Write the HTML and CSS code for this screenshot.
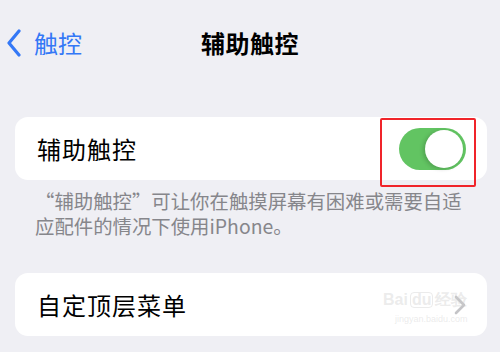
FILE: index.html
```html
<!DOCTYPE html>
<html lang="zh">
<head>
<meta charset="utf-8">
<link rel="stylesheet" href="styles.css">
</head>
<body>
<div class="page">
  <header class="nav">
    <div class="back">
      <svg class="back-icon" width="16" height="28" viewBox="0 0 16 28"><path d="M13 2 L3 14 L13 26" fill="none" stroke="#3478f6" stroke-width="3.2" stroke-linecap="round" stroke-linejoin="round"/></svg>
      <span class="back-text">触控</span>
    </div>
    <h1 class="title">辅助触控</h1>
    <div></div>
  </header>

  <section class="card card-toggle">
    <span class="label">辅助触控</span>
    <div class="switch"><div class="knob"></div></div>
    <div class="highlight"></div>
  </section>
  <p class="desc">“辅助触控”可让你在触摸屏幕有困难或需要自适应配件的情况下使用iPhone。</p>

  <section class="card card-link">
    <span class="label">自定顶层菜单</span>
    <svg class="chev" width="12" height="20" viewBox="0 0 12 20"><path d="M2 2 L10 10 L2 18" fill="none" stroke="#c4c4c7" stroke-width="2.6" stroke-linecap="round" stroke-linejoin="round"/></svg>
    <div class="watermark"><span class="wm-main">Bai<span class="wm-box">du</span>经验</span><span class="wm-sub">jingyan.baidu.com</span></div>
  </section>
</div>
</body>
</html>
```

FILE: styles.css
```css
* { box-sizing: border-box; margin: 0; padding: 0; }
html, body { width: 500px; height: 352px; overflow: hidden; }
body {
  background: #efeff4;
  font-family: "Noto Sans CJK SC", "Noto Sans", sans-serif;
  color: #000;
}
.page { padding: 0 13px 0 15px; }
.nav {
  height: 84px;
  margin: 0 -13px 0 -15px;
  display: grid;
  grid-template-columns: 1fr auto 1fr;
  align-items: center;
  padding-top: 2px;
}
.back {
  display: flex;
  align-items: center;
  padding-left: 6px;
  gap: 12px;
  color: #3478f6;
}
.back-text { font-size: 24px; line-height: 28px; }
.title { font-size: 24px; font-weight: 700; line-height: 28px; letter-spacing: 0.5px; }
.card {
  position: relative;
  background: #fff;
  border-radius: 13px;
  height: 63px;
  display: flex;
  align-items: center;
  justify-content: space-between;
  padding: 0 22px 0 22px;
}
.card-toggle { margin-top: 33px; padding-right: 21px; }
.label { font-size: 24px; line-height: 28px; letter-spacing: 1px; }
.switch {
  width: 67px;
  height: 42px;
  border-radius: 21px;
  background: #62c462;
  position: relative;
}
.knob {
  position: absolute;
  right: 3px;
  top: 2px;
  width: 38px;
  height: 38px;
  border-radius: 50%;
  background: #fff;
  box-shadow: -2px 1px 4px rgba(0,0,0,0.18);
}
.highlight {
  position: absolute;
  left: 365px;
  top: 1px;
  width: 96px;
  height: 69px;
  border: 2px solid #f0242a;
  border-radius: 2px;
}
.desc {
  padding: 8px 10px 0 20px;
  font-size: 19.4px;
  line-height: 25px;
  color: #86868b;
  height: 93px;
}
.chev { margin-right: -1px; }
.watermark {
  position: absolute;
  left: 368px;
  top: 16px;
  display: flex;
  flex-direction: column;
  align-items: flex-end;
  white-space: nowrap;
  color: rgba(205,205,205,0.4);
  font-family: "Liberation Sans", sans-serif;
  pointer-events: none;
}
.wm-main { font-size: 16px; font-weight: 700; line-height: 22px; display: flex; align-items: center; }
.wm-box { border: 1px solid rgba(205,205,205,0.4); border-radius: 4px; padding: 0 1px; margin: 0 2px; line-height: 14px; }
.wm-sub { font-size: 9px; line-height: 12px; margin-top: 2px; }
```
